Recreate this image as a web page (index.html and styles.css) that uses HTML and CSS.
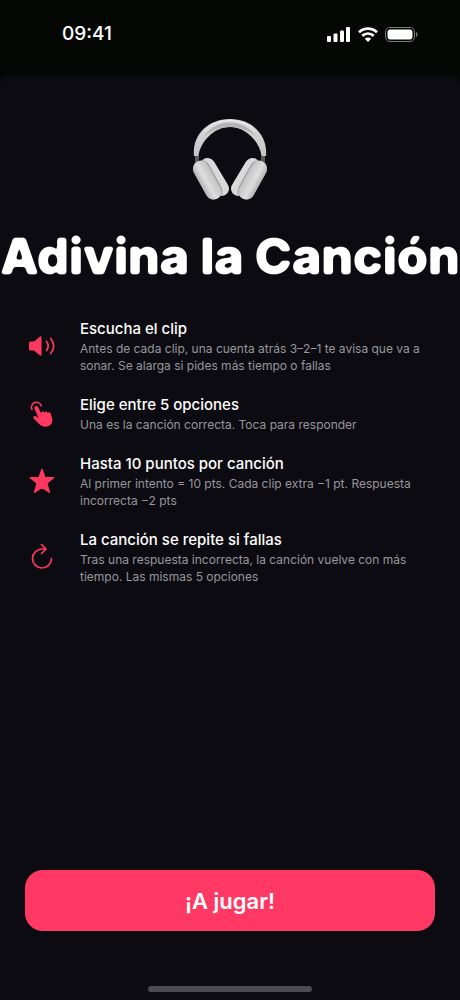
FILE: index.html
```html
<!DOCTYPE html>
<html lang="es">
<head>
    <meta charset="utf-8">
    <meta name="viewport" content="width=device-width, initial-scale=1.0">
    <title>Adivina la Canción</title>
    <link rel="stylesheet" href="styles.css">
</head>
<body>

<header class="status-bar">
    <span class="time">09:41</span>
    <div class="status-icons">
        <svg width="24" height="15" viewBox="0 0 24 15" fill="#fff" aria-hidden="true">
            <rect x="0" y="9" width="4" height="6" rx="1"/>
            <rect x="6.500" y="6.500" width="4" height="8.500" rx="1"/>
            <rect x="13" y="3.500" width="4" height="11.500" rx="1"/>
            <rect x="19" y="0" width="4" height="15" rx="1"/>
        </svg>
        <svg width="20" height="15" viewBox="0 0 20 15" fill="none" stroke="#fff" stroke-width="2.8" aria-hidden="true">
            <path d="M1 5.200C6.200.3 13.800.3 19 5.200"/>
            <path d="M4.300 8.900c3.400-3.100 8-3.100 11.400 0"/>
            <path d="M6.800 11.700c1.800-1.700 4.600-1.700 6.400 0L10 15z" fill="#fff" stroke="none"/>
        </svg>
        <svg width="33" height="15" viewBox="0 0 33 15" aria-hidden="true">
            <rect x=".5" y=".5" width="29" height="14" rx="4.500" fill="none" stroke="#77797a"/>
            <rect x="2.500" y="2.500" width="25" height="10" rx="3" fill="#fff"/>
            <path d="M31 5c2 .8 2 4.200 0 5z" fill="#77797a"/>
        </svg>
    </div>
</header>

<main class="sheet">
    <svg class="headphones" width="74" height="84" viewBox="0 0 74 84" aria-hidden="true">
        <defs>
            <linearGradient id="band" x1="0" y1="0" x2="0" y2="1">
                <stop offset="0" stop-color="#dcdcdc"/>
                <stop offset="1" stop-color="#c4c4c6"/>
            </linearGradient>
            <linearGradient id="cup" x1="0" y1="0" x2="1" y2="0">
                <stop offset="0" stop-color="#b4b4b6"/>
                <stop offset=".4" stop-color="#dedede"/>
                <stop offset="1" stop-color="#c2c2c4"/>
            </linearGradient>
            <linearGradient id="pad" x1="0" y1="0" x2="1" y2="0">
                <stop offset="0" stop-color="#a4a4a6"/>
                <stop offset=".5" stop-color="#d6d6d7"/>
                <stop offset="1" stop-color="#dcdcdd"/>
            </linearGradient>
            <g id="ear">
                <path d="M3 38v8M5 38v7" stroke="#77777b" stroke-width="1.500"/>
                <rect x="-7.500" y="-21" width="15" height="42" rx="7.500" transform="translate(21.500 59) rotate(-31)" fill="url(#pad)"/>
                <rect x="-8.300" y="-21" width="17" height="42" rx="8.500" transform="translate(14.500 62) rotate(-29)" fill="#99999c"/>
                <rect x="-8.300" y="-21" width="16" height="42" rx="8" transform="translate(14.500 62) rotate(-29)" fill="url(#cup)"/>
            </g>
        </defs>
        <path d="M1 38C-1 18 14 1 37 1s38 17 36 37h-4.500C67 25 54 9 37 9S7 25 5.500 38z" fill="url(#band)"/>
        <path d="M11 19C18 8 28 4.500 37 4.500S56 8 63 19C55 12 47 9 37 9s-18 3-26 10z" fill="#b4b4b6"/>
        <path d="M12 13C25-1 49-1 62 13" fill="none" stroke="#f0f0f0"/>
        <use href="#ear"/>
        <use href="#ear" transform="translate(74 0) scale(-1 1)"/>
    </svg>

    <!-- softens the corners of the title letters -->
    <svg class="filters" width="0" height="0" aria-hidden="true">
        <filter id="rounded" x="-5%" y="-10%" width="110%" height="120%">
            <feGaussianBlur stdDeviation="1.800"/>
            <feComponentTransfer>
                <feFuncA type="linear" slope="4" intercept="-1.100"/>
            </feComponentTransfer>
        </filter>
    </svg>
    <h1>Adivina la Canción</h1>

    <ul class="rules">
        <li class="rule">
            <svg class="icon" viewBox="0 0 34 34" aria-hidden="true">
                <path d="M5.500 12.500H9l6-5q1.500-1 1.500.8v17.400q0 1.800-1.500.8l-6-5H5.500Q4 21.500 4 20v-6q0-1.500 1.500-1.500z" fill="currentColor"/>
                <path d="M21.500 12.500q3.400 4.500 0 9M25.700 9.500q6 7.500 0 15" fill="none" stroke="currentColor" stroke-width="1.700" stroke-linecap="round"/>
            </svg>
            <div class="rule-text">
                <h2>Escucha el clip</h2>
                <p>Antes de cada clip, una cuenta atrás 3–2–1 te avisa que va a sonar. Se alarga si pides más tiempo o fallas</p>
            </div>
        </li>
        <li class="rule">
            <svg class="icon" viewBox="0 0 34 34" aria-hidden="true">
                <path d="M7 12.500a5 5 0 1 1 9.300-3.500" fill="none" stroke="currentColor" stroke-width="1.500" stroke-linecap="round"/>
                <path d="M10.200 9.500q1.700-1.300 2.800.6l3.200 6.300c0-2.300 2.700-2.400 3.200-.4.300-1.900 2.800-1.900 3.200.1.700-1.500 2.700-1.100 3.200.7l1.200 4.300c1.500 5.400-2 8.500-6.200 8.700-3 .1-5.200-1.200-7.500-3.500l-4.500-4.600c-1.400-1.700.2-3.300 2-2.300l2.600 1.400-4-9.400q-.4-1.200.8-1.900z" fill="currentColor"/>
            </svg>
            <div class="rule-text">
                <h2>Elige entre 5 opciones</h2>
                <p>Una es la canción correcta. Toca para responder</p>
            </div>
        </li>
        <li class="rule">
            <svg class="icon" viewBox="0 0 34 34" aria-hidden="true">
                <path d="M17 5.500l2.800 8 8.700.2-6.800 5.500 2.600 9-7.300-5-7.300 5 2.600-9-6.800-5.500 8.700-.2z" fill="currentColor" stroke="currentColor" stroke-width="1.600" stroke-linejoin="round"/>
            </svg>
            <div class="rule-text">
                <h2>Hasta 10 puntos por canción</h2>
                <p>Al primer intento = 10 pts. Cada clip extra −1 pt. Respuesta incorrecta −2 pts</p>
            </div>
        </li>
        <li class="rule">
            <svg class="icon" viewBox="0 0 34 34" aria-hidden="true">
                <path d="M26.500 18.500A9.500 9.500 0 1 1 17 9h4M16.500 4.500L21 9l-4.500 4.500" fill="none" stroke="currentColor" stroke-width="1.700" stroke-linecap="round" stroke-linejoin="round"/>
            </svg>
            <div class="rule-text">
                <h2>La canción se repite si fallas</h2>
                <p>Tras una respuesta incorrecta, la canción vuelve con más tiempo. Las mismas 5 opciones</p>
            </div>
        </li>
    </ul>

    <button class="play" type="button">¡A jugar!</button>
    <div class="home-indicator"></div>
</main>

</body>
</html>
```
FILE: styles.css
```css
* {
    box-sizing: border-box;
}
body {
    display: flex;
    flex-direction: column;
    min-height: 100vh;
    margin: 0;
    background: #050705;
    color: #fff;
    font-family: Inter, "Liberation Sans", sans-serif;
}
h1, h2, p, ul {
    margin: 0;
    padding: 0;
}
.status-bar {
    display: flex;
    justify-content: space-between;
    height: 76px;
    padding: 22px 42px 0 62px;
}
.time {
    font-size: 19px;
    font-weight: 500;
    line-height: 24px;
}
.status-icons {
    display: flex;
    align-items: center;
    gap: 7px;
    height: 24px;
}
.sheet {
    flex: 1;
    display: flex;
    flex-direction: column;
    align-items: center;
    padding: 42px 0 8px;
    background: #0c0b11;
    border-radius: 8px 8px 0 0;
}
h1 {
    margin-top: 24px;
    font-size: 50px;
    font-weight: 800;
    line-height: 60px;
    white-space: nowrap;
    filter: url(#rounded);
}
.rules {
    width: 100%;
    margin-top: 32px;
    padding: 0 20px 0 25px;
    list-style: none;
}
.rule {
    display: flex;
    align-items: center;
    gap: 21px;
    margin-bottom: 20px;
}
.icon {
    flex: none;
    width: 34px;
    height: 34px;
    color: #ff3860;
}
.rule-text {
    flex: 1;
}
.rule h2 {
    font-size: 15px;
    font-weight: 500;
    line-height: 22px;
}
.rule p {
    padding-right: 8px;
    color: #98979c;
    font-size: 12px;
    line-height: 17px;
}
.play {
    width: calc(100% - 50px);
    height: 61px;
    margin-top: auto;
    border: 0;
    border-radius: 18px;
    background: #ff3963;
    color: #fff;
    font-family: inherit;
    font-size: 22px;
    font-weight: 600;
    cursor: pointer;
}
.home-indicator {
    width: 164px;
    height: 6px;
    margin-top: 55px;
    border-radius: 3px;
    background: #4d4c50;
}
```
